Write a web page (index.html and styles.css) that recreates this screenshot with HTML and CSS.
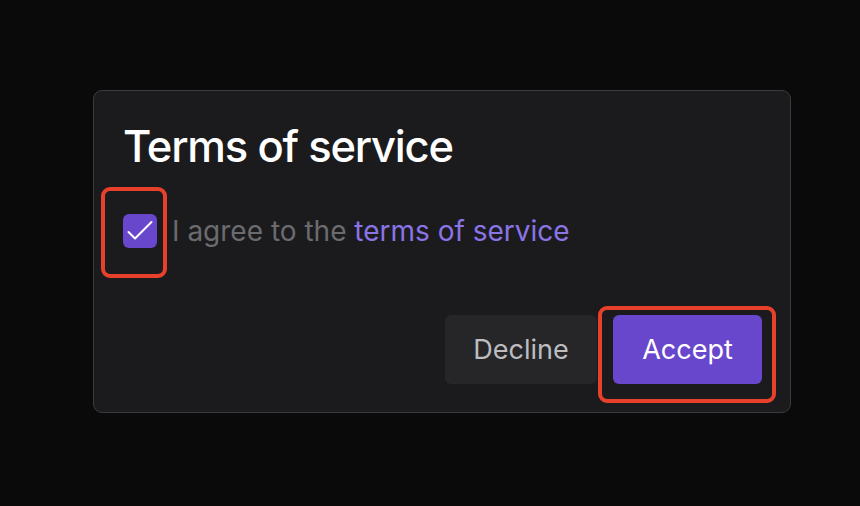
FILE: index.html
```html
<!DOCTYPE html>
<html>
<head>
<meta charset="utf-8">
<link rel="stylesheet" href="styles.css">
</head>
<body>
<div class="dialog">
  <h1 class="title">Terms of service</h1>
  <div class="agree">
    <span class="check">
      <svg width="34" height="34" viewBox="0 0 34 34"><path d="M5.5 18 L12 24.5 L28.5 8" fill="none" stroke="#fff" stroke-width="2" stroke-linecap="round" stroke-linejoin="round"/></svg>
      <span class="hl hl-check"></span>
    </span>
    <span class="label">I agree to the <a class="link">terms of service</a></span>
  </div>
  <div class="actions">
    <button class="btn decline">Decline</button>
    <button class="btn accept">Accept<span class="hl hl-accept"></span></button>
  </div>
</div>
</body>
</html>
```
FILE: styles.css
```css
html, body {
  margin: 0;
  padding: 0;
  background: #0a0a0a;
  width: 860px;
  height: 506px;
  overflow: hidden;
  font-family: Inter, "Noto Sans", sans-serif;
}
.dialog {
  position: absolute;
  left: 93px;
  top: 90px;
  width: 698px;
  height: 323px;
  box-sizing: border-box;
  background: #1b1b1d;
  border: 1.5px solid #3b3b3e;
  border-radius: 9px;
  padding: 0 28px 0 29px;
  display: flex;
  flex-direction: column;
}
.title {
  margin: 31px 0 0 0;
  font-size: 43.5px;
  font-weight: 500;
  color: #fff;
  line-height: 48px;
  letter-spacing: -1.2px;
}
.agree {
  display: flex;
  align-items: center;
  margin-top: 44px;
  gap: 15px;
}
.check {
  position: relative;
  width: 34px;
  height: 34px;
  flex: none;
  background: #6847cc;
  border-radius: 6px;
  display: block;
}
.check svg { display: block; }
.label {
  font-size: 28px;
  line-height: 34px;
  color: #6b6b6f;
}
.link { color: #8a74e6; }
.actions {
  margin-top: auto;
  margin-bottom: 28px;
  display: flex;
  justify-content: flex-end;
  gap: 16px;
}
.btn {
  position: relative;
  height: 69px;
  border: none;
  border-radius: 6px;
  font-family: Inter, sans-serif;
  font-size: 27px;
  font-weight: 400;
  padding: 0;
}
.decline {
  background: #262628;
  color: #bdbdc0;
  width: 152px;
}
.accept {
  background: #6847cc;
  color: #fff;
  width: 149px;
}
.hl {
  position: absolute;
  border: 4px solid #e7402b;
  border-radius: 9px;
  box-sizing: border-box;
}
.hl-check {
  left: -22px;
  top: -27px;
  width: 66px;
  height: 91px;
}
.hl-accept {
  left: -15px;
  top: -9px;
  width: 178px;
  height: 97px;
}
```
